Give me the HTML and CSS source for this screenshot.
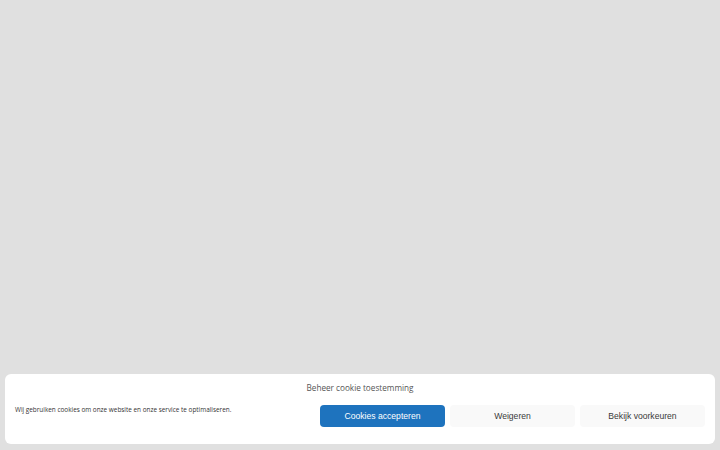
FILE: index.html
```html
<!DOCTYPE html>
<html lang="nl">
<head>
<meta charset="utf-8">
<title>Cookie toestemming</title>
<link rel="stylesheet" href="styles.css">
</head>
<body>
<main class="page"></main>
<div class="cookie-banner">
  <div class="cookie-title">Beheer cookie toestemming</div>
  <div class="cookie-body">
    <p class="cookie-message">Wij gebruiken cookies om onze website en onze service te optimaliseren.</p>
    <div class="cookie-buttons">
      <button class="btn btn-accept">Cookies accepteren</button>
      <button class="btn btn-light">Weigeren</button>
      <button class="btn btn-light">Bekijk voorkeuren</button>
    </div>
  </div>
</div>
</body>
</html>
```
FILE: styles.css
```css
html, body {
  margin: 0;
  padding: 0;
  height: 100%;
}
body {
  background: #e0e0e0;
  font-family: "Open Sans", "Liberation Sans", sans-serif;
  display: flex;
  flex-direction: column;
}
.page {
  flex: 1;
}
.cookie-banner {
  margin: 0 5px 6px 5px;
  background: #ffffff;
  border-radius: 6px;
  padding: 8px 10px 17px 10px;
  display: flex;
  flex-direction: column;
  gap: 11px;
}
.cookie-title {
  text-align: center;
  font-size: 8.2px;
  line-height: 12px;
  color: #555555;
}
.cookie-body {
  display: flex;
  align-items: center;
  justify-content: space-between;
}
.cookie-message {
  margin: 0;
  font-size: 6.4px;
  color: #333333;
  margin-top: -14px;
}
.cookie-buttons {
  display: flex;
  gap: 5px;
}
.btn {
  width: 125px;
  height: 22px;
  border: none;
  border-radius: 4px;
  font-family: "Liberation Sans", Arial, sans-serif;
  font-weight: 400;
  font-size: 8.6px;
  font-variant-ligatures: none;
  padding: 0;
  cursor: pointer;
}
.btn-accept {
  background: #1e73be;
  color: #ffffff;
}
.btn-light {
  background: #f9f9f9;
  color: #3a3a3a;
}
```
